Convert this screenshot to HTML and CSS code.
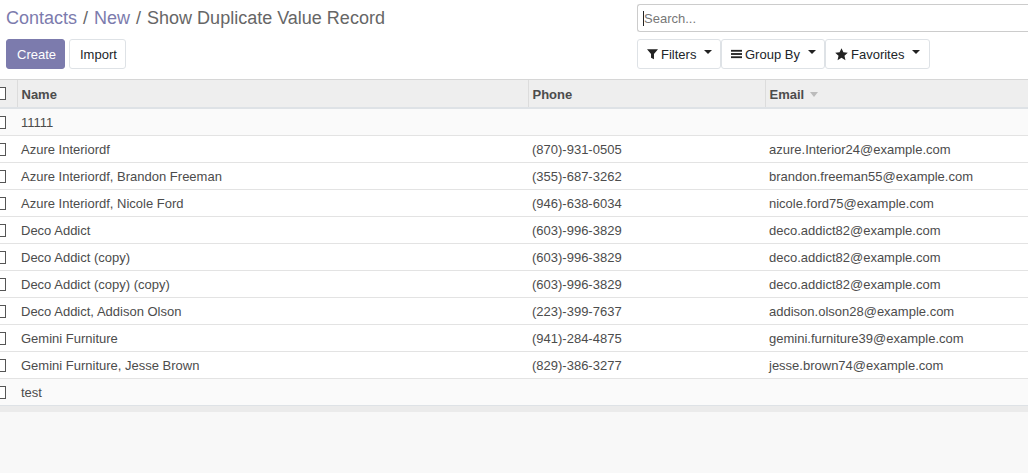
FILE: index.html
```html
<!DOCTYPE html>
<html>
<head>
<meta charset="utf-8">
<link rel="stylesheet" href="styles.css">
</head>
<body>
<div class="panel">
  <div class="left">
    <ol class="crumbs">
      <li><a class="link">Contacts</a></li>
      <li class="sep">/</li>
      <li><a class="link">New</a></li>
      <li class="sep">/</li>
      <li class="active">Show Duplicate Value Record</li>
    </ol>
    <div class="actions">
      <button class="btn primary">Create</button>
      <button class="btn secondary">Import</button>
    </div>
  </div>
  <div class="right">
    <div class="search"><span class="cursor"></span><span class="ph">Search...</span></div>
    <div class="filters">
      <button class="fbtn w1"><svg class="ico" viewBox="0 0 12 12"><path d="M0 0.8h12L7.6 6V11.6L4.4 10V6Z" fill="#222"/></svg>Filters<span class="caret"></span></button>
      <button class="fbtn w2"><svg class="ico" viewBox="0 0 12 12"><rect x="0" y="1.5" width="12" height="2" fill="#222"/><rect x="0" y="5" width="12" height="2" fill="#222"/><rect x="0" y="8.5" width="12" height="2" fill="#222"/></svg>Group By<span class="caret"></span></button>
      <button class="fbtn w3"><svg class="ico star" viewBox="0 0 12 12"><path d="M6 0.2l1.75 3.75 4.05.4-3.05 2.75.9 4.1L6 9.1l-3.65 2.1.9-4.1L.2 4.350l4.05-.4Z" fill="#222"/></svg>Favorites<span class="caret"></span></button>
    </div>
  </div>
</div>
<table class="list">
  <colgroup><col class="c0"><col class="c1"><col class="c2"><col class="c3"></colgroup>
  <thead>
    <tr><th class="chk"><span class="box"></span></th><th>Name</th><th>Phone</th><th>Email <span class="sort"></span></th></tr>
  </thead>
  <tbody>
    <tr class="grey"><td class="chk"><span class="box"></span></td><td>11111</td><td></td><td></td></tr>
    <tr><td class="chk"><span class="box"></span></td><td>Azure Interiordf</td><td>(870)-931-0505</td><td>azure.Interior24@example.com</td></tr>
    <tr><td class="chk"><span class="box"></span></td><td>Azure Interiordf, Brandon Freeman</td><td>(355)-687-3262</td><td>brandon.freeman55@example.com</td></tr>
    <tr><td class="chk"><span class="box"></span></td><td>Azure Interiordf, Nicole Ford</td><td>(946)-638-6034</td><td>nicole.ford75@example.com</td></tr>
    <tr><td class="chk"><span class="box"></span></td><td>Deco Addict</td><td>(603)-996-3829</td><td>deco.addict82@example.com</td></tr>
    <tr><td class="chk"><span class="box"></span></td><td>Deco Addict (copy)</td><td>(603)-996-3829</td><td>deco.addict82@example.com</td></tr>
    <tr><td class="chk"><span class="box"></span></td><td>Deco Addict (copy) (copy)</td><td>(603)-996-3829</td><td>deco.addict82@example.com</td></tr>
    <tr><td class="chk"><span class="box"></span></td><td>Deco Addict, Addison Olson</td><td>(223)-399-7637</td><td>addison.olson28@example.com</td></tr>
    <tr><td class="chk"><span class="box"></span></td><td>Gemini Furniture</td><td>(941)-284-4875</td><td>gemini.furniture39@example.com</td></tr>
    <tr><td class="chk"><span class="box"></span></td><td>Gemini Furniture, Jesse Brown</td><td>(829)-386-3277</td><td>jesse.brown74@example.com</td></tr>
    <tr class="grey"><td class="chk"><span class="box"></span></td><td>test</td><td></td><td></td></tr>
  </tbody>
  <tfoot><tr><td colspan="4"></td></tr></tfoot>
</table>
</body>
</html>
```
FILE: styles.css
```css
html, body {
  margin: 0;
  padding: 0;
  background: #f8f8f8;
  overflow: hidden;
  font-family: "Liberation Sans", Arial, sans-serif;
  font-size: 13px;
  color: #4c4c4c;
}
.panel {
  background: #fff;
  display: grid;
  grid-template-columns: 631px 1fr;
  padding: 4px 0 10px 6px;
  border-bottom: 1px solid #d6d6d6;
}
.crumbs {
  list-style: none;
  margin: 0;
  padding: 0;
  height: 28px;
  display: flex;
  align-items: center;
  font-size: 18px;
  color: #666;
}
.crumbs li { margin: 0; }
.crumbs .sep { padding: 0 6px; color: #666; }
.crumbs .link { color: #7c7bad; }
.crumbs .active { color: #666; }
.actions {
  margin-top: 7px;
  display: flex;
  gap: 4px;
}
.btn {
  height: 30px;
  font-family: inherit;
  font-size: 13px;
  border-radius: 3px;
  padding: 0 10px;
  cursor: pointer;
}
.btn.primary {
  background: #7c7bad;
  color: #fff;
  border: 1px solid #7c7bad;
  width: 59px;
}
.btn.secondary {
  background: #fff;
  color: #212529;
  border: 1px solid #dee2e6;
  width: 57px;
}
.right { overflow: hidden; }
.search {
  height: 28px;
  box-sizing: border-box;
  border: 1px solid #ccc;
  border-right: none;
  border-radius: 3px 0 0 3px;
  display: flex;
  align-items: center;
  padding-left: 5px;
  margin-right: -2px;
}
.cursor {
  display: inline-block;
  width: 1px;
  height: 15px;
  background: #222;
}
.ph { color: #777; font-size: 13px; }
.filters {
  margin-top: 7px;
  display: flex;
}
.fbtn {
  height: 30px;
  background: #fff;
  border: 1px solid #dee2e6;
  border-radius: 3px;
  font-family: inherit;
  font-size: 13px;
  color: #212529;
  display: flex;
  align-items: center;
  padding: 0 0 0 9px;
  box-sizing: border-box;
}
.fbtn.w1 { width: 84px; }
.fbtn.w2 { width: 104px; }
.fbtn.w3 { width: 105px; }
.ico { width: 11px; height: 12px; margin-right: 3px; }
.ico.star { width: 13px; height: 13px; }
.caret {
  display: inline-block;
  width: 0;
  height: 0;
  border-left: 4px solid transparent;
  border-right: 4px solid transparent;
  border-top: 4px solid #222;
  margin-left: 8px;
  position: relative;
  top: -2px;
}
.list {
  margin-left: -20px;
  width: calc(100% + 20px);
  border-collapse: collapse;
  table-layout: fixed;
  background: #fff;
}
.c0 { width: 37px; }
.c1 { width: 511px; }
.c2 { width: 237px; }
.c3 { width: auto; }
.list th {
  background: #eee;
  height: 25px;
  text-align: left;
  font-weight: bold;
  color: #4c4c4c;
  padding: 2px 4px 0;
  border-left: 1px solid #dcdcdc;
  border-bottom: 2px solid #dee2e6;
}
.list th.chk { border-left: none; }
.list td {
  height: 26px;
  padding: 0 4px;
  border-top: 1px solid #e3e3e3;
  white-space: nowrap;
}
.list td.chk, .list th.chk { padding: 0 0 0 13px; }
.box {
  display: block;
  width: 11px;
  height: 11px;
  border: 1px solid #555;
  background: #fff;
}
.list tr.grey td { background: #fafafa; }
.sort {
  display: inline-block;
  width: 0;
  height: 0;
  border-left: 4px solid transparent;
  border-right: 4px solid transparent;
  border-top: 5px solid #bbb;
  margin-left: 2px;
  vertical-align: 2px;
}
.list tfoot td {
  height: 6px;
  background: #ebebeb;
  border-top: 1px solid #dee2e6;
  padding: 0;
}
```
